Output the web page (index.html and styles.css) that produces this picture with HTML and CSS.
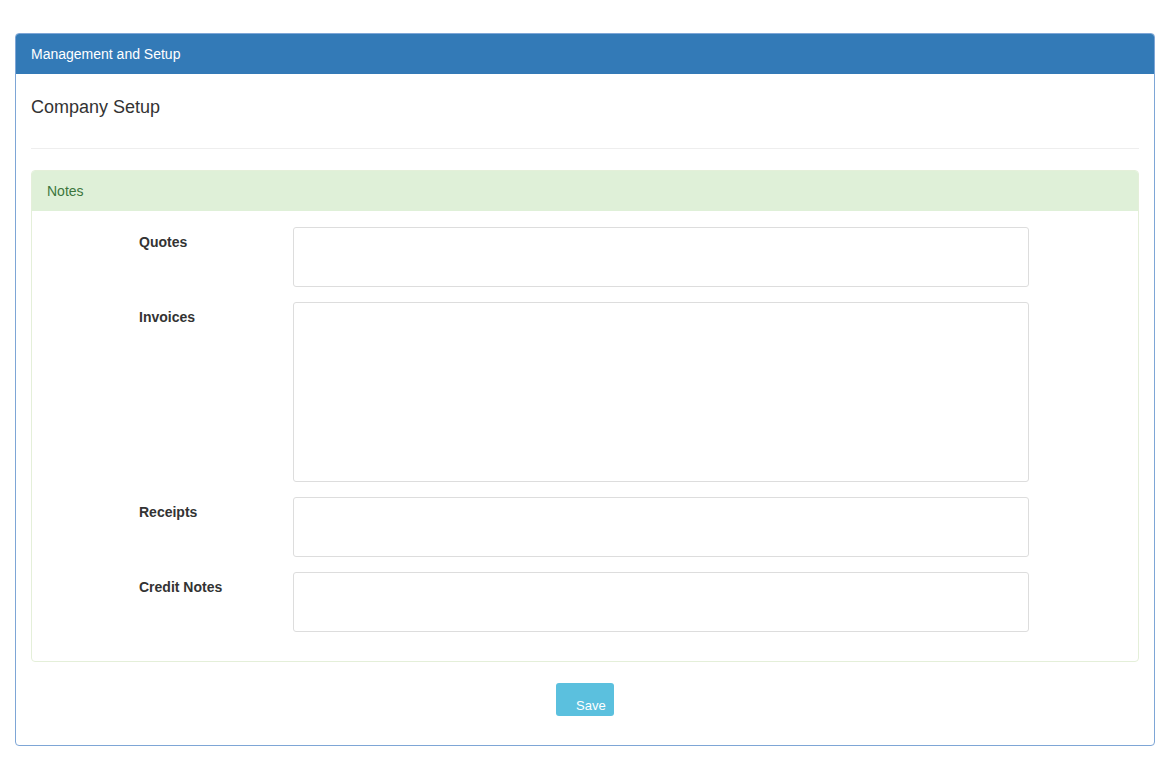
FILE: index.html
```html
<!DOCTYPE html>
<html lang="en">
<head>
  <meta charset="UTF-8" />
  <meta name="viewport" content="width=device-width, initial-scale=1.0" />
  <title>Management and Setup</title>
  <link rel="stylesheet" href="styles.css">
</head>
<body>
  <div class="panel">
    <div class="panel-heading">Management and Setup</div>
    <div class="panel-body">
      <h3>Company Setup</h3>
      <hr />

      <form id="formNotes">
        <div class="notes">
          <div class="notes-heading">Notes</div>
          <div class="notes-body">
            <label for="notesQuotes">Quotes</label>
            <textarea id="notesQuotes" class="short"></textarea>

            <label for="notesInvoices">Invoices</label>
            <textarea id="notesInvoices" class="tall"></textarea>

            <label for="notesReceipts">Receipts</label>
            <textarea id="notesReceipts" class="short"></textarea>

            <label for="notesCredit">Credit Notes</label>
            <textarea id="notesCredit" class="short"></textarea>
          </div>
        </div>

        <div class="actions">
          <button type="submit">Save</button>
        </div>
      </form>
    </div>
  </div>
</body>
</html>
```

FILE: styles.css
```css
body {
  margin: 0;
  font-family: 'Liberation Sans', Arial, sans-serif;
  background-color: #fff;
  color: #333;
}

.panel {
  margin: 33px 15px 0;
  border: 1px solid #7ea6d6;
  border-radius: 4px;
  overflow: hidden;
}

.panel-heading {
  background-color: #337ab7;
  color: #fff;
  font-size: 14px;
  height: 40px;
  line-height: 40px;
  padding: 0 15px;
}

.panel-body {
  padding: 15px 15px 15px;
}

h3 {
  margin: 8px 0 0;
  font-size: 18px;
  font-weight: normal;
  line-height: 20px;
  color: #333;
}

hr {
  border: none;
  border-top: 1px solid #eee;
  margin: 31px 0 21px;
}

.notes {
  border: 1px solid #e4efd9;
  border-radius: 4px;
  overflow: hidden;
}

.notes-heading {
  background-color: #dff0d8;
  color: #3c763d;
  font-size: 14px;
  height: 40px;
  line-height: 40px;
  padding: 0 15px;
}

.notes-body {
  display: grid;
  grid-template-columns: 154px 736px;
  row-gap: 15px;
  padding: 16px 0 29px 107px;
}

label {
  font-size: 14px;
  font-weight: bold;
  line-height: 20px;
  padding-top: 5px;
  color: #333;
}

textarea {
  box-sizing: border-box;
  width: 100%;
  border: 1px solid #ddd;
  border-radius: 3px;
  resize: none;
  font-family: inherit;
  font-size: 14px;
  outline: none;
  margin: 0;
  display: block;
}

textarea.short {
  height: 60px;
}

textarea.tall {
  height: 180px;
}

.actions {
  display: flex;
  justify-content: center;
  margin: 21px 0 14px;
}

button {
  background-color: #5bc0de;
  color: #fff;
  border: none;
  border-radius: 3px;
  font-family: inherit;
  font-size: 13px;
  line-height: 14px;
  padding: 16px 8px 3px 20px;
  width: 58px;
  text-align: left;
  cursor: pointer;
}

button:hover {
  background-color: #31b0d5;
}
```
